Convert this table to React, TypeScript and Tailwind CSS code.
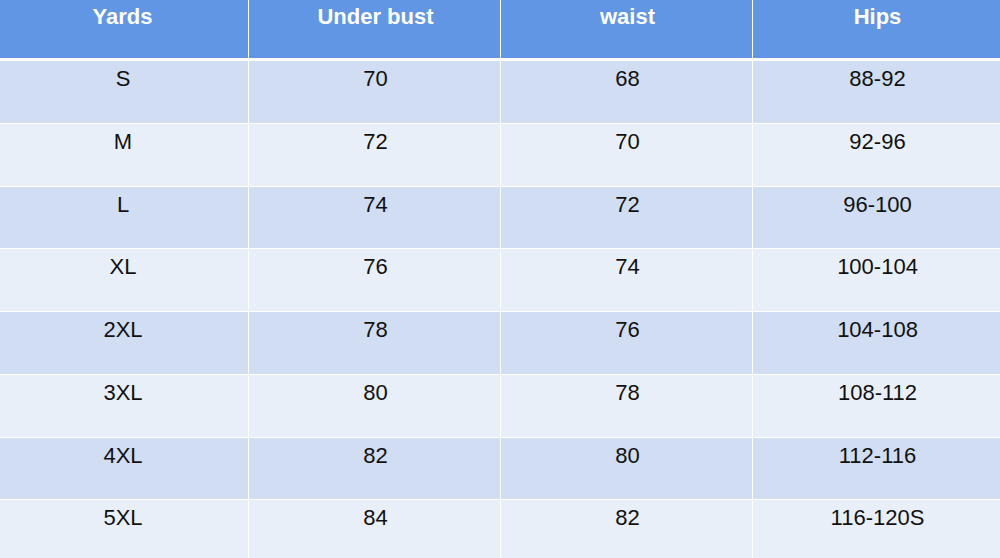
import React from 'react';

const rows: string[][] = [
  ['S', '70', '68', '88-92'],
  ['M', '72', '70', '92-96'],
  ['L', '74', '72', '96-100'],
  ['XL', '76', '74', '100-104'],
  ['2XL', '78', '76', '104-108'],
  ['3XL', '80', '78', '108-112'],
  ['4XL', '82', '80', '112-116'],
  ['5XL', '84', '82', '116-120S'],
];

const headers = ['Yards', 'Under bust', 'waist', 'Hips'];
const widths = ['w-[248px]', 'w-[252px]', 'w-[252px]', 'w-[248px]'];

export default function App() {
  return (
    <div className="w-[1000px] h-[558px] overflow-hidden bg-white font-['Liberation_Sans',Arial,sans-serif]">
      {/* header */}
      <div className="flex h-[58px] border-b-[3px] border-white box-content">
        {headers.map((h, i) => (
          <div
            key={h}
            className={`${widths[i]} bg-[#6096e4] text-white font-bold text-[22px] leading-[26px] pt-[4px] text-center ${i > 0 ? 'border-l-[1.5px] border-white pl-[2px]' : 'pr-[3px]'}`}
          >
            {h}
          </div>
        ))}
      </div>

      {rows.map((r, ri) => (
        <div
          key={r[0]}
          className={`flex h-[61.75px] box-content ${ri < rows.length - 1 ? 'border-b border-white' : ''} ${ri % 2 === 0 ? 'bg-[#d0ddf3]' : 'bg-[#e9eff9]'}`}
        >
          {r.map((c, ci) => (
            <div
              key={ci}
              className={`${widths[ci]} text-[#111111] text-[22px] leading-[26px] pt-[5px] text-center ${ci > 0 ? 'border-l-[1.5px] border-white pl-[2px]' : 'pr-[2px]'}`}
            >
              {c}
            </div>
          ))}
        </div>
      ))}
    </div>
  );
}
